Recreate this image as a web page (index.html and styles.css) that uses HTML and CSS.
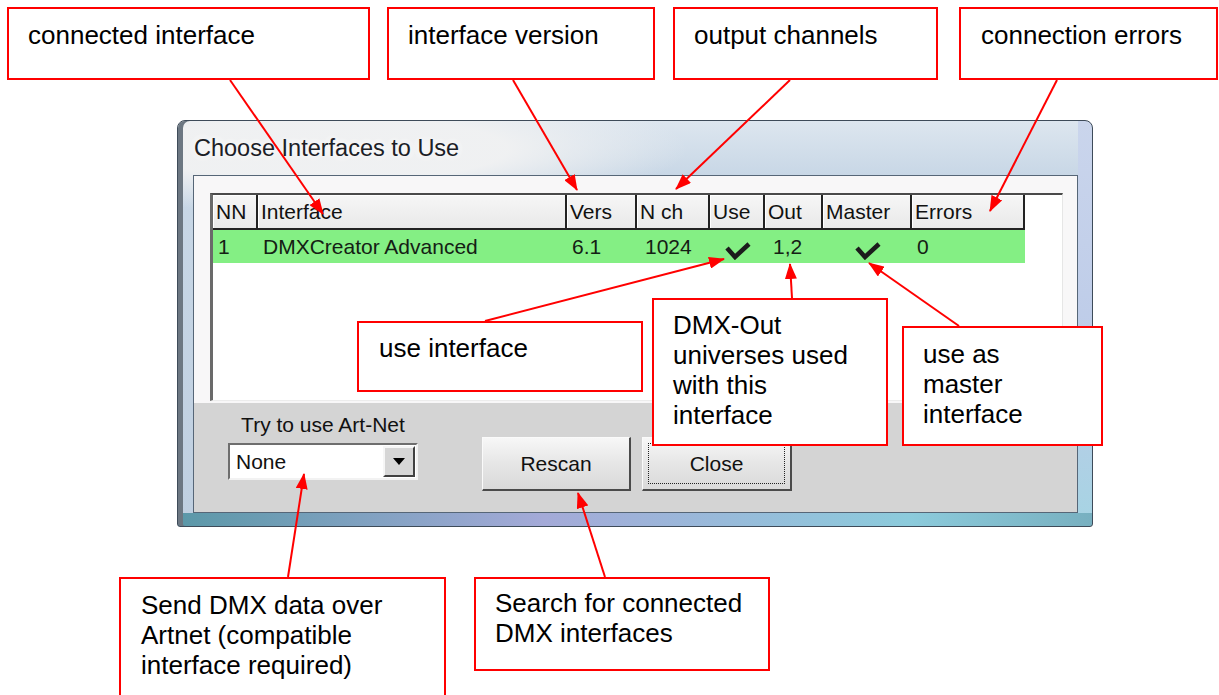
FILE: index.html
```html
<!DOCTYPE html>
<html>
  <head>
    <title>Choose Interfaces to Use</title>
    <link rel="stylesheet" href="styles.css">
  </head>
  <body>
    <div class="sheet">
      <!-- dialog window -->
      <div class="window">
        <div class="titlebar"><span class="title">Choose Interfaces to Use</span></div>
        <div class="client">
          <div class="panel">
            <div class="listview">
              <div class="grid head">
                <div class="hcell">NN</div>
                <div class="hcell">Interface</div>
                <div class="hcell">Vers</div>
                <div class="hcell">N ch</div>
                <div class="hcell">Use</div>
                <div class="hcell">Out</div>
                <div class="hcell">Master</div>
                <div class="hcell">Errors</div>
              </div>
              <div class="grid row">
                <div class="cell">1</div>
                <div class="cell">DMXCreator Advanced</div>
                <div class="cell">6.1</div>
                <div class="cell wide">1024</div>
                <div class="cell mid">
                  <svg class="check" width="26" height="20" viewBox="0 0 26 20"><polyline points="2,8 10,17 24,4" /></svg>
                </div>
                <div class="cell wide">1,2</div>
                <div class="cell mid">
                  <svg class="check" width="26" height="20" viewBox="0 0 26 20"><polyline points="2,8 10,17 24,4" /></svg>
                </div>
                <div class="cell">0</div>
              </div>
            </div>
          </div>
          <div class="controls">
            <div class="artnet">
              <div class="label">Try to use Art-Net</div>
              <div class="combo">
                <span class="combo-text">None</span>
                <span class="combo-btn"><span class="tri"></span></span>
              </div>
            </div>
            <div class="btn rescan">Rescan</div>
            <div class="btn close"><span class="focus">Close</span></div>
          </div>
        </div>
      </div>

      <!-- callouts -->
      <div class="callout c-connected">connected interface</div>
      <div class="callout c-version">interface version</div>
      <div class="callout c-channels">output channels</div>
      <div class="callout c-errors">connection errors</div>
      <div class="callout c-use">use interface</div>
      <div class="callout c-out">DMX-Out<br>universes used<br>with this<br>interface</div>
      <div class="callout c-master">use as<br>master<br>interface</div>
      <div class="callout c-artnet">Send DMX data over<br>Artnet (compatible<br>interface required)</div>
      <div class="callout c-search">Search for connected<br>DMX interfaces</div>

      <svg class="arrows" width="1219" height="695" viewBox="0 0 1219 695">
        <defs>
          <marker id="head" viewBox="0 0 16 12" refX="15" refY="6" markerWidth="16" markerHeight="12" markerUnits="userSpaceOnUse" orient="auto">
            <path d="M0 0 L16 6 L0 12 Z" fill="#ff0000" />
          </marker>
        </defs>
        <line x1="230" y1="80" x2="323" y2="214" />
        <line x1="513" y1="80" x2="577" y2="190" />
        <line x1="790" y1="80" x2="676" y2="189" />
        <line x1="1057" y1="80" x2="990" y2="211" />
        <line x1="485" y1="321" x2="724" y2="259" />
        <line x1="792" y1="298" x2="790" y2="264" />
        <line x1="959" y1="326" x2="869" y2="263" />
        <line x1="288" y1="577" x2="304" y2="474" />
        <line x1="605" y1="577" x2="578" y2="493" />
      </svg>
    </div>
  </body>
</html>
```

FILE: styles.css
```css
/* page */
body {
    margin: 0;
    background: #fff;
    font-family: "Liberation Sans", Arial, sans-serif;
    color: #000;
}

.sheet {
    position: relative;
    width: 1219px;
    height: 695px;
    overflow: hidden;
}

/* dialog window (aero frame) */
.window {
    position: absolute;
    left: 177px;
    top: 120px;
    width: 916px;
    height: 407px;
    box-sizing: border-box;
    display: flex;
    flex-direction: column;
    padding: 0 14px 13px 15px;
    border: 1px solid #3e4b59;
    border-radius: 8px 8px 3px 3px;
    background:
        radial-gradient(ellipse 360px 64px at 150px 28px, rgba(240, 241, 242, 0.98) 50%, rgba(240, 241, 242, 0) 100%),
        linear-gradient(to right, #5b98a8, #a4aad8 40%, #8ccbdc 80%, #78b0c0) bottom / 100% 13px no-repeat,
        linear-gradient(to bottom, #cad5ec, #bccbe8 60%, #a6d4e3) right / 14px 100% no-repeat,
        linear-gradient(to bottom, #dde6ef 0, #c8d7e6 54px, #bfcfe0 100%);
    box-shadow: inset 5px 0 0 #6c7782;
}

.titlebar {
    height: 54px;
    display: flex;
    align-items: center;
    padding-left: 1px;
}

.title {
    font-size: 23.5px;
    color: #1b2026;
    text-shadow: 0 0 8px #fff, 0 0 12px #fff;
}

.client {
    flex: 1;
    display: flex;
    flex-direction: column;
    border: 1px solid #566677;
}

.panel {
    background: #f8f7f8;
    padding: 17px 14px 2px 16px;
}

/* list view */
.listview {
    height: 208px;
    box-sizing: border-box;
    background: #fff;
    border-top: 2px solid #4a4a4a;
    border-left: 3px solid #6a6a6a;
    border-right: 1px solid #e6e6e6;
    border-bottom: 1px solid #ececec;
    font-size: 21px;
}

.grid {
    display: grid;
    width: 812px;
    grid-template-columns: 45px 309px 70px 73px 55px 58px 89px 113px;
}

.head {
    height: 35px;
}

.hcell {
    display: flex;
    align-items: center;
    padding-left: 3px;
    background: linear-gradient(#f6f6f6, #e9e9e9);
    border-right: 2px solid #222;
    border-bottom: 2px solid #222;
    box-shadow: inset 1px 1px 0 #fff;
    color: #111;
}

.row {
    height: 33px;
    background: #84ef84;
}

.cell {
    display: flex;
    align-items: center;
    padding-left: 5px;
    color: #142014;
}

.cell.wide {
    padding-left: 8px;
}

.cell.mid {
    justify-content: center;
    padding-left: 0;
}

.check {
    margin-top: 6px;
}

.check polyline {
    fill: none;
    stroke: #1c1c1c;
    stroke-width: 4.5;
    stroke-linejoin: miter;
}

/* bottom controls */
.controls {
    flex: 1;
    background: #d4d4d4;
    display: flex;
    align-items: flex-start;
    padding: 10px 0 0 34px;
    font-size: 21px;
    color: #111;
}

.artnet {
    width: 190px;
    display: flex;
    flex-direction: column;
    align-items: center;
}

.label {
    line-height: 23px;
    margin-bottom: 7px;
}

.combo {
    width: 190px;
    height: 37px;
    box-sizing: border-box;
    display: flex;
    align-items: center;
    justify-content: space-between;
    background: #fff;
    border: 2px solid;
    border-color: #6e6e6e #f2f2f2 #f2f2f2 #6e6e6e;
}

.combo-text {
    padding-left: 6px;
}

.combo-btn {
    width: 32px;
    height: 31px;
    box-sizing: border-box;
    margin-right: 1px;
    display: flex;
    align-items: center;
    justify-content: center;
    background: #d6d6d6;
    border: 2px solid;
    border-color: #f6f6f6 #404040 #404040 #f6f6f6;
}

.tri {
    width: 0;
    height: 0;
    border-left: 6px solid transparent;
    border-right: 6px solid transparent;
    border-top: 7px solid #000;
}

.btn {
    margin-top: 24px;
    height: 54px;
    box-sizing: border-box;
    display: flex;
    align-items: center;
    justify-content: center;
    background: linear-gradient(#f7f7f7, #e6e6e6 50%, #d9d9d9);
    border-style: solid;
    border-width: 1px 2px 2px 1px;
    border-color: #fafafa #4a4a4a #4a4a4a #fafafa;
}

.rescan {
    width: 149px;
    margin-left: 64px;
}

.close {
    width: 150px;
    margin-left: 11px;
    padding: 5px;
}

.focus {
    flex: 1;
    align-self: stretch;
    display: flex;
    align-items: center;
    justify-content: center;
    border: 1px dotted #222;
}

/* red callouts */
.callout {
    position: absolute;
    box-sizing: border-box;
    border: 2px solid #ff0000;
    background: #fff;
    font-size: 26px;
    line-height: 30px;
    color: #000;
}

.c-connected { left: 7px; top: 7px; width: 363px; height: 73px; padding: 11px 0 0 19px; }
.c-version { left: 387px; top: 7px; width: 268px; height: 73px; padding: 11px 0 0 19px; }
.c-channels { left: 673px; top: 7px; width: 265px; height: 73px; padding: 11px 0 0 19px; }
.c-errors { left: 959px; top: 7px; width: 259px; height: 73px; padding: 11px 0 0 20px; }
.c-use { left: 357px; top: 321px; width: 286px; height: 71px; padding: 10px 0 0 20px; }
.c-out { left: 652px; top: 298px; width: 236px; height: 148px; padding: 10px 0 0 19px; }
.c-master { left: 902px; top: 326px; width: 201px; height: 120px; padding: 11px 0 0 19px; }
.c-artnet { left: 119px; top: 577px; width: 327px; height: 130px; padding: 11px 0 0 20px; }
.c-search { left: 474px; top: 577px; width: 296px; height: 94px; padding: 9px 0 0 19px; }

/* arrows */
.arrows {
    position: absolute;
    left: 0;
    top: 0;
    pointer-events: none;
}

.arrows line {
    stroke: #ff0000;
    stroke-width: 2;
    marker-end: url(#head);
}
```
